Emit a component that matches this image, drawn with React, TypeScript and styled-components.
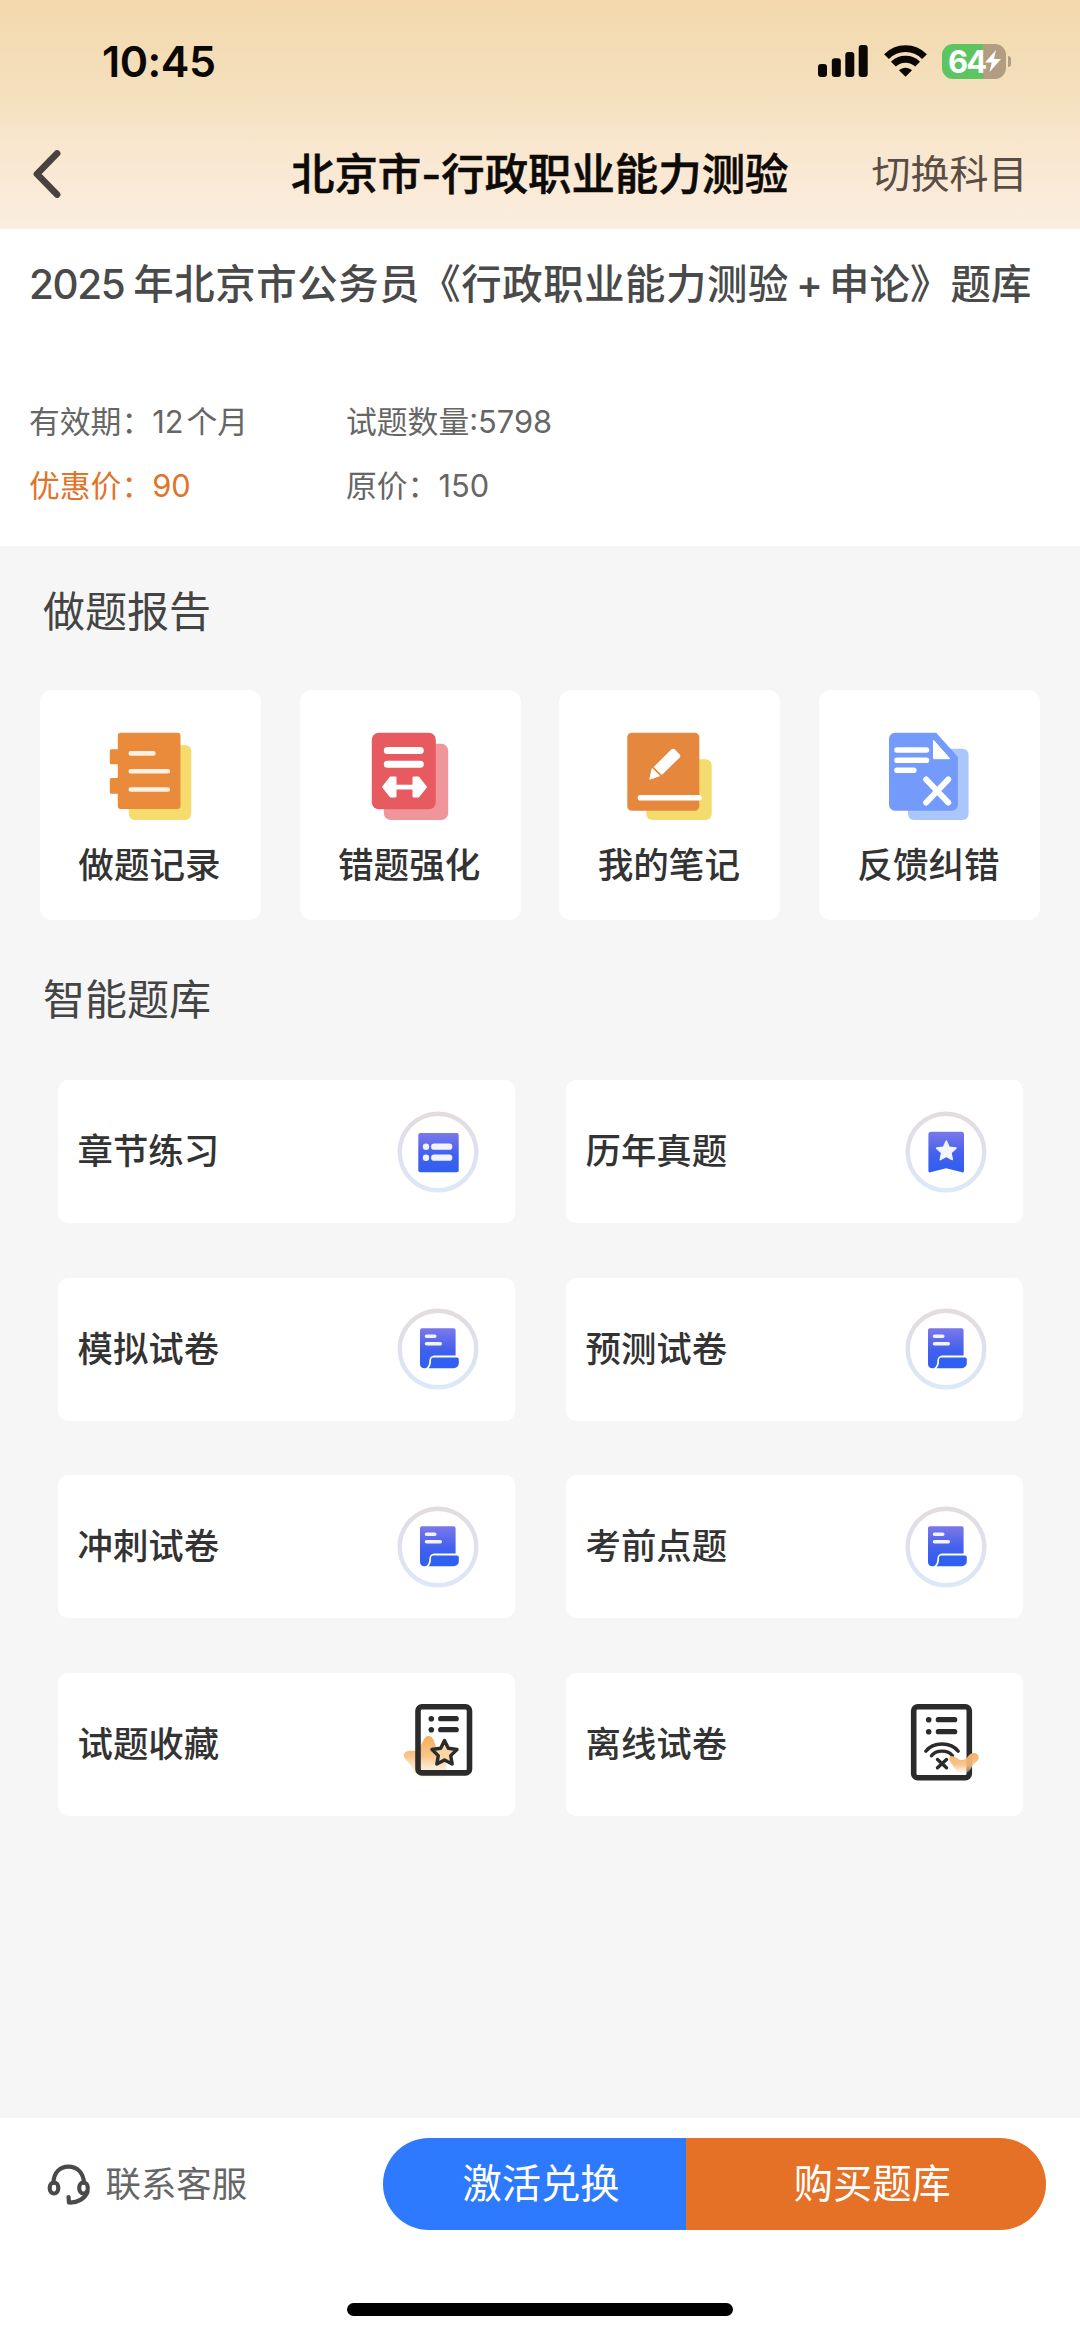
import React from "react";
import styled, { createGlobalStyle } from "styled-components";

const GlobalStyle = createGlobalStyle`
  *, *::before, *::after { box-sizing: border-box; }
  body {
    margin: 0;
    background: #f6f6f6;
    font-family: Inter, "Noto Sans CJK SC", sans-serif;
    color: #333;
  }
  svg { display: block; flex: none; }
`;

const Screen = styled.div`
  width: 1080px;
  height: 2336px;
  display: flex;
  flex-direction: column;
  background: #f6f6f6;
  overflow: hidden;
  white-space: nowrap;
`;

const Header = styled.header`
  height: 229px;
  flex: none;
  background: linear-gradient(180deg, #f3d8ac 0%, #f4e1bf 44%, #f8e5cb 58%, #fbeee0 100%);
`;

const StatusBar = styled.div`
  height: 122px;
  padding: 0 69px 0 102px;
  display: flex;
  align-items: center;
  justify-content: space-between;
`;

const Clock = styled.span`
  font-size: 43px;
  font-weight: 600;
  line-height: 52px;
  letter-spacing: -0.5px;
  color: #0b0704;
`;

const StatusIcons = styled.div`
  display: flex;
  align-items: center;
`;

const SignalIcon = styled.svg`
  margin-right: 16px;
`;

const WifiIcon = styled.svg`
  margin-right: 15px;
`;

const Battery = styled.div`
  width: 64px;
  height: 35px;
  border-radius: 11px;
  display: flex;
  align-items: center;
  padding-left: 6.5px;
  background: linear-gradient(90deg, #5cc562 0 41px, #b09d82 41px);
`;

const BatteryLevel = styled.span`
  width: 36.5px;
  font-size: 31px;
  font-weight: 700;
  line-height: 35px;
  letter-spacing: -2px;
  color: #fff;
`;

const BatteryTip = styled.div`
  width: 3px;
  height: 11px;
  margin-left: 2.5px;
  border-radius: 0 4px 4px 0;
  background: #b09d82;
`;

const NavBar = styled.div`
  height: 104px;
  padding: 0 52.5px 0 31px;
  display: grid;
  grid-template-columns: 200px 1fr 200px;
  align-items: center;
`;

const NavTitle = styled.h1`
  margin: 0;
  text-align: center;
  justify-self: center;
  padding-left: 21px;
  font-size: 43.4px;
  font-weight: 500;
  -webkit-text-stroke: 0.6px #0d0a08;
  line-height: 60px;
  color: #0d0a08;
`;

const NavAction = styled.span`
  justify-self: end;
  font-size: 39px;
  line-height: 60px;
  color: #5a4d43;
`;

const Summary = styled.section`
  height: 317px;
  flex: none;
  padding: 26px 29px 0;
  background: #fff;
`;

const BankName = styled.h2`
  margin: 0 0 75px;
  display: flex;
  font-size: 40.4px;
  font-weight: 500;
  line-height: 60px;
  color: #4a4a4a;
`;

const Part = styled.span<{ $gap?: number; $spacing?: number }>`
  margin-right: ${(p) => p.$gap ?? 0}px;
  letter-spacing: ${(p) => p.$spacing ?? 0}px;
`;

const Facts = styled.div`
  display: grid;
  grid-template-columns: 317px 1fr;
  grid-auto-rows: 64px;
  align-items: center;
`;

const Fact = styled.div<{ $accent?: boolean }>`
  display: flex;
  font-size: 30.8px;
  line-height: 44px;
  color: ${(p) => (p.$accent ? "#e0742a" : "#666")};
`;

const SectionTitle = styled.h3<{ $top: number; $bottom: number }>`
  margin: ${(p) => p.$top}px 0 ${(p) => p.$bottom}px 43px;
  font-size: 42px;
  font-weight: 400;
  line-height: 60px;
  color: #444;
`;

const ReportGrid = styled.div`
  flex: none;
  padding: 0 40px;
  display: grid;
  grid-template-columns: repeat(4, 221px);
  justify-content: space-between;
`;

const ReportCard = styled.div`
  height: 230px;
  padding-top: 42px;
  border-radius: 12px;
  background: #fff;
  display: flex;
  flex-direction: column;
  align-items: center;
`;

const ReportLabel = styled.span`
  margin-top: 19px;
  padding-right: 2px;
  font-size: 35.6px;
  font-weight: 500;
  line-height: 54px;
  color: #333;
`;

const BankGrid = styled.div`
  padding: 0 57.5px;
  display: grid;
  grid-template-columns: 457px 457px;
  column-gap: 51px;
  row-gap: 54.6px;
`;

const BankCard = styled.div`
  height: 143px;
  padding: 0 36px 0 20px;
  border-radius: 10px;
  background: #fff;
  display: flex;
  align-items: center;
  justify-content: space-between;
  font-size: 35.4px;
  font-weight: 500;
  color: #333;
`;

const BankLabel = styled.span`
  padding-top: 1px;
  line-height: 54px;
`;

const Footer = styled.footer`
  height: 218px;
  flex: none;
  margin-top: auto;
  padding-top: 19.5px;
  background: #fff;
  display: flex;
  flex-direction: column;
  align-items: center;
  justify-content: space-between;
  padding-bottom: 20px;
`;

const Actions = styled.div`
  width: 100%;
  padding: 0 34.5px 0 46px;
  display: flex;
  align-items: center;
`;

const Contact = styled.div`
  flex: 1;
  display: flex;
  align-items: center;
  gap: 13.5px;
  padding-top: 2px;
  font-size: 35.4px;
  line-height: 54px;
  color: #666;
`;

const ActionButton = styled.button<{ $primary?: boolean }>`
  width: ${(p) => (p.$primary ? 359.5 : 303)}px;
  height: 92.5px;
  padding: 1px 0 0 13px;
  border: 0;
  border-radius: ${(p) => (p.$primary ? "0 47px 47px 0" : "47px 0 0 47px")};
  background: ${(p) => (p.$primary ? "#e47125" : "#2d7aff")};
  color: #fff;
  font-family: inherit;
  font-size: 39.3px;
  line-height: 58px;
`;

const HomeIndicator = styled.div`
  width: 386px;
  height: 13px;
  border-radius: 7px;
  background: #000;
`;

const RecordIcon = () => (
  <svg width="88" height="88" viewBox="0 0 88 88">
    <rect x="21.8" y="13" width="62.4" height="75" rx="6" fill="#f6dc6c" />
    <path
      d="M13.8.7H70.5a3 3 0 0 1 3 3V74a3 3 0 0 1-3 3H13.8a3 3 0 0 1-3-3V61.7H4.3a1.5 1.5 0 0 1-1.5-1.5V47.5A1.5 1.5 0 0 1 4.3 46h6.5V32.3H4.3a1.5 1.5 0 0 1-1.5-1.5v-12a1.5 1.5 0 0 1 1.5-1.5h6.5V3.7a3 3 0 0 1 3-3z"
      fill="#e98b3a"
    />
    <g stroke="#fff1e2" strokeWidth="4.6" strokeLinecap="round">
      <path d="M23.8 21.4H46.4M23.8 39.2H60.8M23.8 57.5H60.8" />
    </g>
  </svg>
);

const MistakeIcon = () => (
  <svg width="88" height="88" viewBox="0 0 88 88">
    <rect x="17.8" y="11.7" width="64.4" height="76.3" rx="7" fill="#f0969b" />
    <rect x="5.8" y=".7" width="64" height="76.6" rx="7" fill="#e65a60" />
    <g stroke="#fff" strokeWidth="7" strokeLinecap="round">
      <path d="M21.3 18.4H54.3M21.3 32.3H54.3" />
    </g>
    <path d="M26 52.7h25v4.8H26z" fill="#fff" />
    <path
      d="M17 55 24.5 45.5H29.5V64.5H24.5zM60 55 52.5 45.5H47.5V64.5H52.5z"
      fill="#fff"
      stroke="#fff"
      strokeWidth="2"
      strokeLinejoin="round"
    />
  </svg>
);

const NoteIcon = () => (
  <svg width="88" height="88" viewBox="0 0 88 88">
    <rect x="20.3" y="27.3" width="65.4" height="60.7" rx="6" fill="#f4db6e" />
    <rect x="1.3" y=".7" width="72" height="78" rx="4.5" fill="#e5883e" />
    <path d="M14.5 65.8H73" stroke="#fff" strokeWidth="5.6" strokeLinecap="round" />
    <path d="M45.3 17.5a2.5 2.5 0 0 1 3.5 0L53.5 22.2a2.5 2.5 0 0 1 0 3.5L35.8 43 27.7 34.9z" fill="#fff" />
    <path d="M26.2 36.5 33.5 43.8 23.8 47.2z" fill="#fff" stroke="#fff" strokeLinejoin="round" />
  </svg>
);

const FeedbackIcon = () => (
  <svg width="88" height="88" viewBox="0 0 88 88">
    <rect x="23" y="16.7" width="60.6" height="71.3" rx="6" fill="#aac6fb" />
    <path d="M10 .7H51.2L72.9 25V72.7a6 6 0 0 1-6 6H10a6 6 0 0 1-6-6V6.7a6 6 0 0 1 6-6z" fill="#749bfb" />
    <path d="M48.5 8.3 64.8 26.7H48.5z" fill="#fff" stroke="#fff" strokeLinejoin="round" />
    <g stroke="#fff" strokeLinecap="round">
      <path d="M12 18H41.5M12 28.3H41.5M12 38.2H28.8" strokeWidth="5.6" />
      <path d="M41.2 47.5 63.2 70.5M63.2 47.5 41.2 70.5" strokeWidth="6" />
    </g>
  </svg>
);

const RingDefs = ({ id }: { id: string }) => (
  <defs>
    <linearGradient id={`${id}-ring`} x1="0" y1="0" x2="0" y2="1">
      <stop offset="0" stopColor="#e3dcdf" />
      <stop offset=".5" stopColor="#dfe0ef" />
      <stop offset="1" stopColor="#dbe9f8" />
    </linearGradient>
    <linearGradient id={`${id}-fill`} x1="0" y1="0" x2="0" y2="1">
      <stop offset="0" stopColor="#7b78ea" />
      <stop offset=".55" stopColor="#4260ee" />
      <stop offset="1" stopColor="#2f5ff0" />
    </linearGradient>
  </defs>
);

const Ring = ({ id, children }: { id: string; children: React.ReactNode }) => (
  <svg width="82" height="82" viewBox="0 0 82 82">
    <RingDefs id={id} />
    <circle cx="41" cy="41" r="38.3" fill="#fff" stroke={`url(#${id}-ring)`} strokeWidth="4.4" />
    {children}
  </svg>
);

const ChapterIcon = () => (
  <Ring id="chapter">
    <rect x="21.3" y="22" width="40.4" height="39.3" rx="2" fill="url(#chapter-fill)" />
    <circle cx="29" cy="35.7" r="3.2" fill="#f1f4ff" />
    <circle cx="29" cy="46.7" r="3.2" fill="#f1f4ff" />
    <path d="M37.2 35.7H52.2M37.2 46.7H52.2" stroke="#f1f4ff" strokeWidth="6.3" strokeLinecap="round" />
  </Ring>
);

const PastIcon = () => (
  <Ring id="past">
    <path
      d="M26 20.7H56.4a2.6 2.6 0 0 1 2.6 2.6V60a1.5 1.5 0 0 1-2 1.3L41.2 57.3 25.4 61.3a1.5 1.5 0 0 1-2-1.3V23.3a2.6 2.6 0 0 1 2.6-2.6z"
      fill="url(#past-fill)"
    />
    <path
      d="M41.3 30 44.2 36.2 51 37.1 46 41.8 47.3 48.6 41.3 45.3 35.3 48.6 36.6 41.8 31.6 37.1 38.4 36.2z"
      fill="#f1f6ff"
      stroke="#f1f6ff"
      strokeWidth="1.5"
      strokeLinejoin="round"
    />
  </Ring>
);

const PaperIcon = ({ id }: { id: string }) => (
  <Ring id={id}>
    <path
      d="M25 20.3H56.6a2 2 0 0 1 2 2V47.6H38.5C33.5 47.6 32.6 50 32.3 53.5C32 57.3 30.5 60.3 27.5 60.3C24.5 60.3 23 58.5 23 56V22.3a2 2 0 0 1 2-2z"
      fill={`url(#${id}-fill)`}
    />
    <path d="M36 49.5H60a1.8 1.8 0 0 1 1.8 1.8V55.3a5 5 0 0 1-5 5H31.5C33.3 58.5 34 56 34 53.5C34 51 34.3 49.5 36 49.5z" fill="#3060f0" />
    <path d="M29.5 28.2H37.8M29.5 35.7H43.3" stroke="#f1f4ff" strokeWidth="3.5" strokeLinecap="round" />
  </Ring>
);

const FavoriteIcon = () => (
  <svg width="82" height="82" viewBox="0 0 82 82">
    <defs>
      <linearGradient id="favorite-glow" x1="0" y1="0" x2="0" y2="1">
        <stop offset="0" stopColor="#f5ad5c" />
        <stop offset=".5" stopColor="#f9c78d" />
        <stop offset="1" stopColor="#fdf0dc" stopOpacity=".3" />
      </linearGradient>
    </defs>
    <path
      d="M31.5 33C27 33 25 41 22 46C19 49.5 13 46 8.5 49C4 52.5 9 57 13 61C17 66 16 74 24 75H46C51 72 50 66 49 60C47 52 40 48 38 41C36.5 36 35 33 31.5 33z"
      fill="url(#favorite-glow)"
    />
    <rect x="21" y="3.7" width="51.5" height="66.2" rx="4" fill="none" stroke="#2c2b2b" strokeWidth="5.6" />
    <circle cx="34.3" cy="15.7" r="2.8" fill="#2c2b2b" />
    <circle cx="34.3" cy="26.7" r="2.8" fill="#2c2b2b" />
    <path d="M43.7 15.7H59.2M43.7 26.7H59.2" stroke="#2c2b2b" strokeWidth="5.2" strokeLinecap="round" />
    <path
      d="M47.5 37.5 51.3 45.3 60 46.5 53.7 52.6 55.2 61 47.5 57 39.8 61 41.3 52.6 35 46.5 43.7 45.3z"
      fill="#f9d6a4"
      stroke="#2c2b2b"
      strokeWidth="3.4"
      strokeLinejoin="round"
    />
  </svg>
);

const OfflineIcon = () => (
  <svg width="82" height="82" viewBox="0 0 82 82">
    <defs>
      <linearGradient id="offline-glow" x1="0" y1="0" x2="0" y2="1">
        <stop offset="0" stopColor="#f6b062" />
        <stop offset=".6" stopColor="#f9c084" stopOpacity=".9" />
        <stop offset="1" stopColor="#fdebd2" stopOpacity=".3" />
      </linearGradient>
    </defs>
    <rect x="8.7" y="3.7" width="55.6" height="71" rx="4" fill="none" stroke="#2c2b2b" strokeWidth="5.6" />
    <circle cx="23.7" cy="16.7" r="2.8" fill="#2c2b2b" />
    <circle cx="23.7" cy="28.7" r="2.8" fill="#2c2b2b" />
    <g fill="none" stroke="#2c2b2b" strokeLinecap="round">
      <path d="M33.3 16.7H49.7M33.3 28.7H49.7" strokeWidth="5.2" />
      <path d="M20.8 48.2C28 38.5 46 38.5 53.2 48.2M26.5 52.8C31 46.5 43 46.5 47.5 52.8" strokeWidth="3.4" />
      <path d="M32.5 56.5 41.5 64.8M41.5 56.5 32.5 64.8" strokeWidth="3.4" />
    </g>
    <path
      d="M45 53.5C49 51 53 58 58 57C63 56.5 63 50 69 50C75 50.5 75 57 70.5 59.5C66 62.5 67 67 62 69.5C57 72 52 70 50 66C48 61 42 57 45 53.5z"
      fill="url(#offline-glow)"
    />
  </svg>
);

const reports = [
  { label: "做题记录", icon: <RecordIcon /> },
  { label: "错题强化", icon: <MistakeIcon /> },
  { label: "我的笔记", icon: <NoteIcon /> },
  { label: "反馈纠错", icon: <FeedbackIcon /> },
];

const banks = [
  { label: "章节练习", icon: <ChapterIcon /> },
  { label: "历年真题", icon: <PastIcon /> },
  { label: "模拟试卷", icon: <PaperIcon id="mock" /> },
  { label: "预测试卷", icon: <PaperIcon id="forecast" /> },
  { label: "冲刺试卷", icon: <PaperIcon id="sprint" /> },
  { label: "考前点题", icon: <PaperIcon id="tips" /> },
  { label: "试题收藏", icon: <FavoriteIcon /> },
  { label: "离线试卷", icon: <OfflineIcon /> },
];

export default function App() {
  return (
    <>
      <GlobalStyle />
      <Screen>
        <Header>
          <StatusBar>
            <Clock>10:45</Clock>
            <StatusIcons>
              <SignalIcon width="50" height="32" viewBox="0 0 50 32" fill="#0b0704">
                <rect x="0" y="19" width="9" height="13" rx="3" />
                <rect x="13.8" y="13.3" width="9" height="18.7" rx="3" />
                <rect x="27.3" y="7" width="9" height="25" rx="3" />
                <rect x="40.7" y="0" width="9" height="32" rx="3" />
              </SignalIcon>
              <WifiIcon width="43" height="32" viewBox="0 0 43 32">
                <g fill="none" stroke="#0b0704" strokeWidth="6.8">
                  <path d="M2.5 11.6C13 1 30 1 40.5 11.6" />
                  <path d="M9.4 19.2C16 12.6 27 12.6 33.6 19.2" />
                </g>
                <path d="M15 25.3C18.6 21.9 24.4 21.9 28 25.3L21.5 31.8z" fill="#0b0704" />
              </WifiIcon>
              <Battery>
                <BatteryLevel>64</BatteryLevel>
                <svg width="16" height="22" viewBox="0 0 16 22">
                  <path d="M11 0 0 12.5H6.7L4.5 22 16 9H9z" fill="#fff" />
                </svg>
              </Battery>
              <BatteryTip />
            </StatusIcons>
          </StatusBar>
          <NavBar>
            <svg width="32" height="50" viewBox="0 0 32 50">
              <path d="M26 4.5 6 25 26 45.5" fill="none" stroke="#4b413e" strokeWidth="6.8" strokeLinecap="round" strokeLinejoin="round" />
            </svg>
            <NavTitle>北京市-行政职业能力测验</NavTitle>
            <NavAction>切换科目</NavAction>
          </NavBar>
        </Header>

        <Summary>
          <BankName>
            <Part $gap={9} $spacing={-1.4}>2025</Part>
            <Part $gap={7} $spacing={0.6}>年北京市公务员《行政职业能力测验</Part>
            <Part $gap={6}>+</Part>
            <Part $spacing={0.1}>申论》题库</Part>
          </BankName>
          <Facts>
            <Fact>
              <Part>有效期：</Part>
              <Part $gap={3}>12</Part>
              <Part>个月</Part>
            </Fact>
            <Fact>试题数量:5798</Fact>
            <Fact $accent>优惠价：90</Fact>
            <Fact>原价：150</Fact>
          </Facts>
        </Summary>

        <SectionTitle $top={36} $bottom={48}>做题报告</SectionTitle>
        <ReportGrid>
          {reports.map((r) => (
            <ReportCard key={r.label}>
              {r.icon}
              <ReportLabel>{r.label}</ReportLabel>
            </ReportCard>
          ))}
        </ReportGrid>

        <SectionTitle $top={50} $bottom={50}>智能题库</SectionTitle>
        <BankGrid>
          {banks.map((b) => (
            <BankCard key={b.label}>
              <BankLabel>{b.label}</BankLabel>
              {b.icon}
            </BankCard>
          ))}
        </BankGrid>

        <Footer>
          <Actions>
            <Contact>
              <svg width="46" height="42" viewBox="0 0 46 42">
                <g fill="none" stroke="#4a4a4a" strokeWidth="4.2" strokeLinecap="round">
                  <path d="M7.5 19C7.5 8.5 14 2.6 22.5 2.6S37.5 8.5 38 19" />
                  <ellipse cx="8" cy="24" rx="4.3" ry="5.5" />
                  <ellipse cx="37.5" cy="24" rx="4.3" ry="5.5" />
                  <path d="M41.5 28C39 34.5 31.5 39 23 38.5L22.5 33" strokeLinejoin="round" />
                </g>
              </svg>
              <span>联系客服</span>
            </Contact>
            <ActionButton>激活兑换</ActionButton>
            <ActionButton $primary>购买题库</ActionButton>
          </Actions>
          <HomeIndicator />
        </Footer>
      </Screen>
    </>
  );
}
